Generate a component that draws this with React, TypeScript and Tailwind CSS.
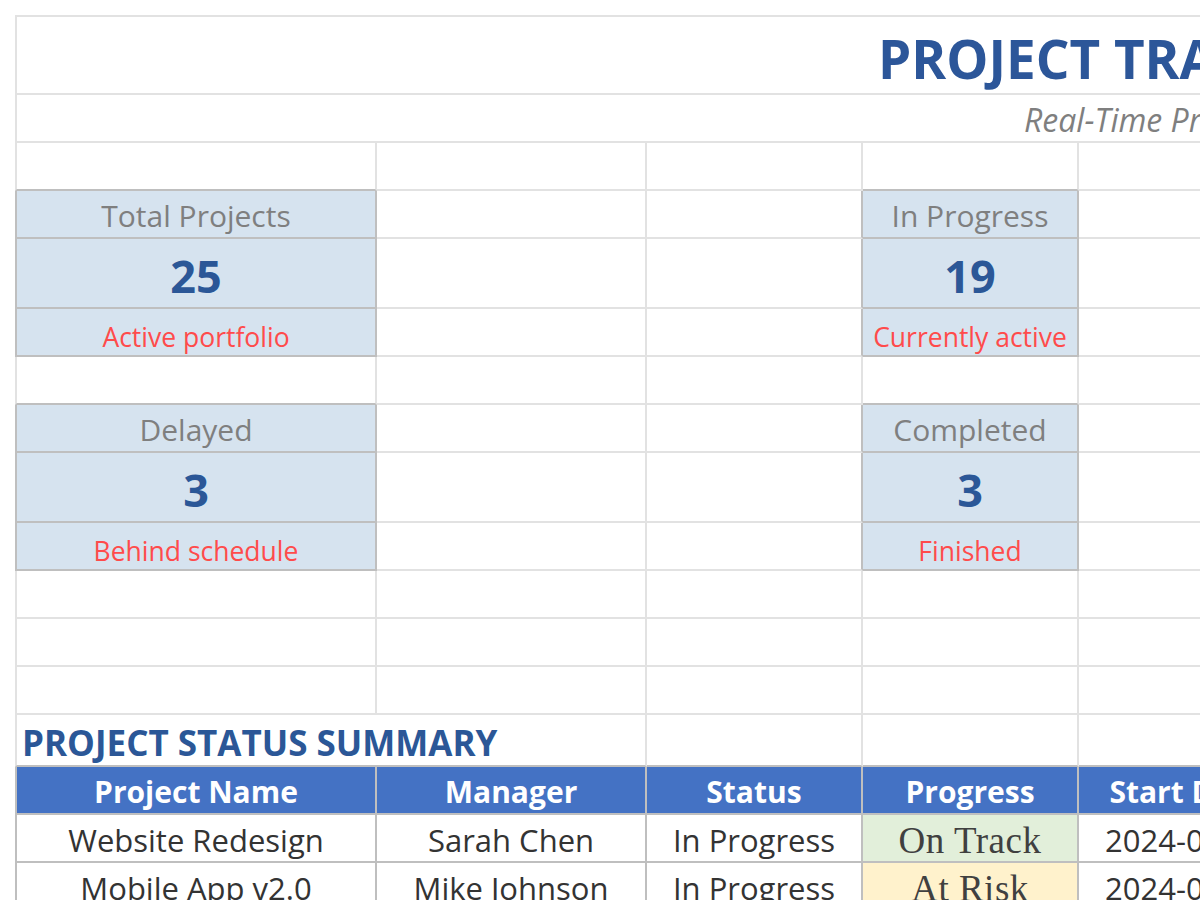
import React from 'react';

type CellProps = {
  className?: string;
  line?: string;
  children?: React.ReactNode;
};

// one spreadsheet cell: right + bottom gridline, col A / row 1 add their own left / top
function Cell({ className = '', line = 'border-[#e2e2e2]', children }: CellProps) {
  return (
    <div
      className={`flex min-w-0 items-center justify-center overflow-hidden whitespace-nowrap border-b-2 border-r-2 leading-none ${line} ${className}`}
    >
      {children}
    </div>
  );
}

const cardBg = 'bg-[#d6e3ef]';

export default function App() {
  return (
    <div className="h-[900px] w-[1200px] overflow-hidden bg-white pl-[15px] pt-[15px] font-['Open_Sans',sans-serif]">
      <div className="grid w-max grid-cols-[362px_270px_216px_216px_216px] grid-rows-[80px_48px_48px_48px_70px_48px_48px_48px_70px_48px_48px_48px_48px_52px_48px_48px_48px]">
        {/* title */}
        <Cell className="col-span-5 justify-start border-l-2 border-t-2 pl-[861px] pt-[7px]">
          <span className="text-[53px] font-bold text-[#2c5699]">PROJECT TRACKER DASHBOARD</span>
        </Cell>
        <Cell className="col-span-5 justify-start border-l-2 pl-[1007px] pt-1">
          <span className="text-[32px] italic text-[#7f7f7f]">Real-Time Project Monitoring &amp; Analytics</span>
        </Cell>

        {/* spacer row */}
        <Cell className="border-l-2 border-b-[#bfbfbf]" />
        <Cell />
        <Cell />
        <Cell className="border-b-[#bfbfbf]" />
        <Cell />

        {/* cards row 1: label */}
        <Cell line="border-[#bfbfbf]" className={`border-l-2 pt-1 ${cardBg}`}>
          <span className="text-[30px] text-[#7f7f7f]">Total Projects</span>
        </Cell>
        <Cell />
        <Cell className="border-r-[#bfbfbf]" />
        <Cell line="border-[#bfbfbf]" className={`pt-1 ${cardBg}`}>
          <span className="text-[30px] text-[#7f7f7f]">In Progress</span>
        </Cell>
        <Cell />

        {/* value */}
        <Cell line="border-[#bfbfbf]" className={`border-l-2 pt-1 ${cardBg}`}>
          <span className="text-[45px] font-bold text-[#2b5797]">25</span>
        </Cell>
        <Cell />
        <Cell className="border-r-[#bfbfbf]" />
        <Cell line="border-[#bfbfbf]" className={`pt-1 ${cardBg}`}>
          <span className="text-[45px] font-bold text-[#2b5797]">19</span>
        </Cell>
        <Cell />

        {/* note */}
        <Cell line="border-[#bfbfbf]" className={`border-l-2 pt-[10px] ${cardBg}`}>
          <span className="text-[26.5px] text-[#ff4b4b]">Active portfolio</span>
        </Cell>
        <Cell />
        <Cell className="border-r-[#bfbfbf]" />
        <Cell line="border-[#bfbfbf]" className={`pt-[10px] ${cardBg}`}>
          <span className="text-[26.5px] text-[#ff4b4b]">Currently active</span>
        </Cell>
        <Cell />

        {/* gap row */}
        <Cell className="border-l-2 border-b-[#bfbfbf]" />
        <Cell />
        <Cell />
        <Cell className="border-b-[#bfbfbf]" />
        <Cell />

        {/* cards row 2 */}
        <Cell line="border-[#bfbfbf]" className={`border-l-2 pt-1 ${cardBg}`}>
          <span className="text-[30px] text-[#7f7f7f]">Delayed</span>
        </Cell>
        <Cell />
        <Cell className="border-r-[#bfbfbf]" />
        <Cell line="border-[#bfbfbf]" className={`pt-1 ${cardBg}`}>
          <span className="text-[30px] text-[#7f7f7f]">Completed</span>
        </Cell>
        <Cell />

        <Cell line="border-[#bfbfbf]" className={`border-l-2 pt-1 ${cardBg}`}>
          <span className="text-[45px] font-bold text-[#2b5797]">3</span>
        </Cell>
        <Cell />
        <Cell className="border-r-[#bfbfbf]" />
        <Cell line="border-[#bfbfbf]" className={`pt-1 ${cardBg}`}>
          <span className="text-[45px] font-bold text-[#2b5797]">3</span>
        </Cell>
        <Cell />

        <Cell line="border-[#bfbfbf]" className={`border-l-2 pt-[10px] ${cardBg}`}>
          <span className="text-[26.5px] text-[#ff4b4b]">Behind schedule</span>
        </Cell>
        <Cell />
        <Cell className="border-r-[#bfbfbf]" />
        <Cell line="border-[#bfbfbf]" className={`pt-[10px] ${cardBg}`}>
          <span className="text-[26.5px] text-[#ff4b4b]">Finished</span>
        </Cell>
        <Cell />

        {/* empty rows */}
        {[0, 1, 2].map((r) => (
          <React.Fragment key={r}>
            <Cell className="border-l-2" />
            <Cell />
            <Cell />
            <Cell />
            <Cell />
          </React.Fragment>
        ))}

        {/* section heading */}
        <Cell className="col-span-2 justify-start border-l-2 border-b-[#bfbfbf] pl-[5px] pt-1">
          <span className="text-[35px] font-bold text-[#2b5797]">PROJECT STATUS SUMMARY</span>
        </Cell>
        <Cell className="border-b-[#bfbfbf]" />
        <Cell className="border-b-[#bfbfbf]" />
        <Cell className="border-b-[#bfbfbf]" />

        {/* table header */}
        {['Project Name', 'Manager', 'Status', 'Progress', 'Start Date'].map((h, i) => (
          <Cell
            key={h}
            line="border-[#bfbfbf]"
            className={`bg-[#4472c4] pt-1 ${i === 0 ? 'border-l-2' : ''}`}
          >
            <span className="text-[30px] font-bold text-white">{h}</span>
          </Cell>
        ))}

        {/* rows */}
        {[
          ['Website Redesign', 'Sarah Chen', 'In Progress', 'On Track', '2024-01-15'],
          ['Mobile App v2.0', 'Mike Johnson', 'In Progress', 'At Risk', '2024-02-01'],
        ].map((row) => (
          <React.Fragment key={row[0]}>
            {row.map((v, i) =>
              i === 3 ? (
                <Cell
                  key={i}
                  line="border-[#bfbfbf]"
                  className={`pt-1 ${v === 'On Track' ? 'bg-[#e2efda]' : 'bg-[#fff2cc]'}`}
                >
                  <span className="font-['Liberation_Serif',serif] text-[37px] tracking-[0.5px] text-[#404040]">{v}</span>
                </Cell>
              ) : (
                <Cell key={i} line="border-[#bfbfbf]" className={`pt-1 ${i === 0 ? 'border-l-2' : ''}`}>
                  <span className="text-[31px] text-[#333333]">{v}</span>
                </Cell>
              )
            )}
          </React.Fragment>
        ))}
      </div>
    </div>
  );
}
